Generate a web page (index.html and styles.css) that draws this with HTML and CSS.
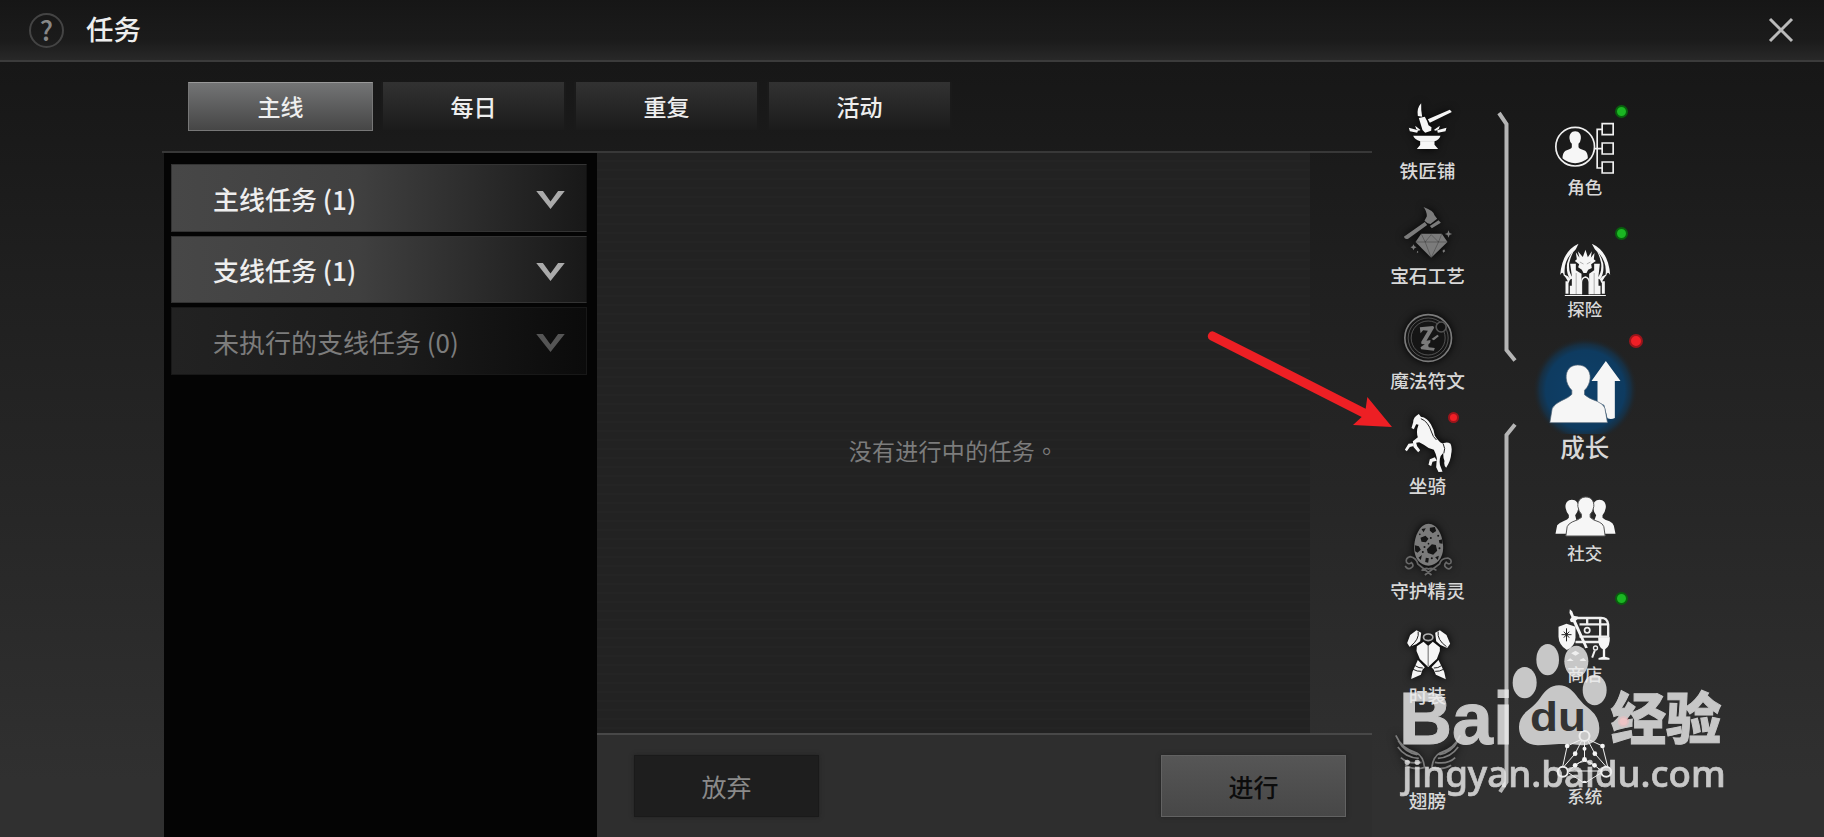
FILE: index.html
```
<!DOCTYPE html>
<html lang="zh-CN">
<head>
    <meta charset="UTF-8">
    <title>任务</title>
    <link rel="stylesheet" href="styles.css">
</head>
<body>
    <header class="topbar">
        <span class="help">?</span>
        <h1>任务</h1>
        <svg class="close" viewBox="0 0 26 26"><path d="M2 2L24 24M24 2L2 24"/></svg>
    </header>

    <main class="screen">
        <section class="quest">
            <div class="tabs">
                <button class="tab active">主线</button>
                <button class="tab">每日</button>
                <button class="tab">重复</button>
                <button class="tab">活动</button>
            </div>
            <div class="quest-body">
                <div class="quest-list">
                    <div class="group">主线任务 (1)<svg class="chevron" viewBox="0 0 30 20"><path d="M0 0H7L15 11L23 0H30L15 19Z"/></svg></div>
                    <div class="group">支线任务 (1)<svg class="chevron" viewBox="0 0 30 20"><path d="M0 0H7L15 11L23 0H30L15 19Z"/></svg></div>
                    <div class="group empty">未执行的支线任务 (0)<svg class="chevron" viewBox="0 0 30 20"><path d="M0 0H7L15 11L23 0H30L15 19Z"/></svg></div>
                </div>
                <div class="detail">
                    <div class="detail-text">没有进行中的任务<span class="stop">。</span></div>
                    <div class="actions">
                        <button class="btn disabled">放弃</button>
                        <button class="btn">进行</button>
                    </div>
                </div>
            </div>
        </section>

        <!-- 二级菜单 -->
        <ul class="submenu">
            <li>
                <svg class="icon" viewBox="52.5 15 240 186">
                    <path d="M152 40Q138 55 142 78L155 80Q151 58 152 40Z"/>
                    <path d="M145 84L163 80L170 94L174 106L183 112L182 122L164 128L156 120Z"/>
                    <path d="M172 88L238 59L244 66L178 98Z"/>
                    <path d="M115 113L143 121L140 128L118 124ZM134 107L150 120L145 122L137 117ZM228 113L200 121L202 128L225 124ZM208 107L190 120L196 122L205 117Z"/>
                    <path d="M128 137H210Q206 150 192 154V164L203 177H139L149 165V154Q132 148 128 137Z"/>
                    <path class="cut" d="M148 154H192" stroke-opacity=".3"/>
                </svg>
                <span>铁匠铺</span>
            </li>
            <li class="locked">
                <svg class="icon" viewBox="52.5 15 240 186">
                    <g transform="translate(0 -315)">
                        <path d="M159 351Q190 362 192 376L200 386L180 402L171 400L162 392L169 379Q169 363 159 351Z"/>
                        <path d="M163 396L170 405L113 446Q104 450 100 440ZM178 408L204 391L211 398L184 415Z"/>
                        <path d="M152 431H214L231 456L182 503L135 456Z"/>
                        <path class="cut" d="M135 456H231M152 431L164 456L182 503L204 456L214 431M164 456L182 434L204 456"/>
                        <path d="M234 421L237 429L245 432L237 435L234 443L231 435L223 432L231 429ZM129 463L132 469L138 472L132 475L129 481L126 475L120 472L126 469ZM221 478L224 484L218 488L216 482ZM140 482L144 486L139 490Z"/>
                    </g>
                </svg>
                <span>宝石工艺</span>
            </li>
            <li class="locked">
                <svg class="icon" viewBox="52.5 45 240 186">
                    <circle cx="173" cy="144" r="68" fill="#151515"/>
                    <circle class="line" cx="173" cy="144" r="70" stroke-width="5"/>
                    <circle class="line dim" cx="173" cy="144" r="60"/>
                    <circle class="line dim" cx="173" cy="144" r="51"/>
                    <path d="M148 112L188 108L191 113L168 152L180 150L179 158Q170 163 175 172L193 174L190 182L152 178L150 172L163 163L153 162L152 156L172 122L158 121L150 130Z"/>
                    <path d="M183 147L201 134L205 139L190 151Z"/>
                    <circle class="rune" cx="212" cy="111" r="15"/>
                </svg>
                <span>魔法符文</span>
            </li>
            <li>
                <svg class="icon" viewBox="52.5 360 240 186">
                    <path d="M145 372L151 380Q171 383 181 403Q191 420 193 437Q199 447 209 457Q216 462 220 459Q231 455 240 461Q246 473 242 492Q241 512 227 533Q219 526 222 513Q218 504 218 489Q207 499 208 509Q206 522 211 532L216 545L204 546L197 532L199 505Q196 490 190 479Q175 477 160 464L146 457L137 458L140 469L149 481L143 487L129 471L127 454L142 442Q136 424 144 404L137 403L130 418L123 414L128 397Q128 381 145 372Z"/>
                    <path d="M127 460L114 461L103 479L109 484L118 471L130 468ZM193 502L178 508L174 524L182 528L186 515L199 512Z"/>
                    <path class="cut" d="M151 386Q173 394 183 426Q187 441 198 450M218 461Q226 476 220 490" stroke-width="3"/>
                </svg>
                <span>坐骑</span>
                <i class="dot red horse"></i>
            </li>
            <li class="locked">
                <svg class="icon" viewBox="52.5 30 240 186">
                    <path d="M174 56C200 56 218 91 218 129C218 160 197 182 174 182C149 182 131 160 131 129C131 91 150 56 174 56Z"/>
                    <g class="holes">
                        <path d="M178 68L193 66L197 78L187 85L178 77ZM150 98L165 92L174 101L166 112L153 110ZM133 121L145 124L151 134L141 143L134 139ZM184 118L196 120L200 137L188 149L172 144L169 133ZM166 158L175 160L173 173L164 171ZM194 157L205 152L202 165ZM205 106L216 103L216 116L207 115ZM153 72L166 70L159 82ZM154 150L144 158L151 165Z"/>
                        <circle cx="181" cy="99" r="3"/><circle cx="162" cy="126" r="3"/><circle cx="184" cy="160" r="3"/><circle cx="203" cy="92" r="3"/>
                        <circle cx="148" cy="88" r="2.500"/><circle cx="207" cy="130" r="3"/><circle cx="157" cy="141" r="3"/><circle cx="174" cy="116" r="2.500"/>
                    </g>
                    <path class="line" d="M163 210L207 177Q211 160 232 159Q245 163 241 174Q235 180 227 172Q218 182 227 188Q236 197 244 184M183 210L142 177Q137 158 119 155Q104 159 108 172Q114 180 123 173Q132 182 123 188Q112 196 104 183M153 197Q166 187 174 192Q184 187 198 196" stroke-width="5" opacity=".8"/>
                </svg>
                <span>守护精灵</span>
            </li>
            <li>
                <svg class="icon" viewBox="52.5 345 240 186">
                    <path d="M138 376L152 383L149 409L137 418L117 425L110 414L119 390ZM208 376L194 383L197 409L210 420L230 429L239 416L228 390Z"/>
                    <path class="cut" d="M143 380Q147 403 120 424M203 380Q199 404 228 425" stroke-width="3"/>
                    <ellipse class="line" cx="173" cy="397" rx="14" ry="10" stroke-width="5" opacity=".7"/>
                    <path d="M159 410L173 423L187 410L208 427L208 438L199 462L173 486L148 462L138 438L139 424Z"/>
                    <path class="cut" d="M173 423V483" stroke-width="2"/>
                    <path d="M142 465L163 487L156 494L151 509L122 522L126 500ZM204 465L183 487L190 494L196 509L226 523L221 500Z"/>
                    <path class="cut" d="M134 482Q145 490 157 489M128 493Q140 500 153 499M213 482Q202 490 190 489M219 493Q207 500 194 499" stroke-width="3"/>
                </svg>
                <span>时装</span>
            </li>
            <li class="locked">
                <svg class="icon" viewBox="52.5 405 240 186">
                    <path class="line" d="M76 436Q92 475 139 489Q158 499 162 531M82 471Q104 503 145 505M91 503Q114 524 153 517M104 526Q130 542 163 532M269 436Q253 475 208 489Q189 499 184 531M263 471Q241 503 202 505M254 503Q233 524 193 517M242 526Q216 542 184 532M83 452Q103 488 140 494M263 452Q243 488 207 494" stroke-width="5"/>
                </svg>
                <span>翅膀</span>
            </li>
        </ul>

        <svg class="bracket" viewBox="1490 105 30 695">
            <path d="M1499 113L1506.500 124V350L1515 360.500M1515 424.500L1506.500 435V782L1500 792"/>
        </svg>

        <!-- 一级菜单 -->
        <ul class="menu">
            <li>
                <svg class="icon" viewBox="196.5 68 240 186">
                    <circle class="line" cx="287" cy="172" r="58" stroke-width="5"/>
                    <path d="M287 126C299 126 306 136 304 148Q303 158 297 163V174Q300 180 317 184Q325 190 325 207Q309 221 287 222Q264 221 249 207Q249 190 258 184Q275 180 277 174V163Q271 158 270 148C269 136 275 126 287 126Z"/>
                    <path class="line" d="M368 103H401V136H368ZM368 161H401V194H368ZM368 218H401V251H368ZM366 120H353V236H366M344 178H366" stroke-width="5"/>
                </svg>
                <span>角色</span>
                <i class="dot green"></i>
            </li>
            <li>
                <svg class="icon" viewBox="196.5 431 240 186">
                    <path d="M297 460Q248 482 242 554Q250 539 253 556Q259 559 268 579Q270 563 283 566Q266 548 269 519Q276 487 289 477ZM337 460Q387 482 392 554Q384 539 380 556Q375 559 365 579Q363 563 352 566Q368 548 365 519Q359 487 346 477Z"/>
                    <path d="M285 479Q250 511 256 553Q266 555 272 566Q259 548 263 519Q270 492 285 479ZM349 479Q384 511 378 553Q368 555 362 566Q375 548 371 519Q364 492 349 479Z" fill="#222"/>
                    <path d="M289 486L300 502L295 483L310 500L318 478L325 501L337 483L334 502L345 488L343 507L349 512L335 522L337 533L326 538L321 548H312L307 538L296 531L299 522L286 512L292 507Z"/>
                    <path class="cut" d="M301 515L312 521M333 515L322 521"/>
                    <path d="M272 520H289V540L306 550V612H277V556ZM344 520H361L357 556V612H329V550L344 540ZM258 573H267V610H258ZM367 573H376V610H367ZM271 586H285V612H271ZM349 586H363V612H349ZM256 614H379V622H256Z"/>
                    <path class="cut" d="M290 548V612M344 548V612"/>
                    <path class="line" d="M306 612V575Q307 562 318 560Q328 562 329 575V612" stroke-width="4"/>
                </svg>
                <span>探险</span>
                <i class="dot green"></i>
            </li>
            <li class="current">
                <svg class="icon" viewBox="136.5 40 360 300">
                    <defs>
                        <radialGradient id="glow">
                            <stop offset="0" stop-color="#0e406a"/>
                            <stop offset=".75" stop-color="#0e3b60"/>
                            <stop offset=".87" stop-color="#153249" stop-opacity=".8"/>
                            <stop offset="1" stop-color="#212121" stop-opacity="0"/>
                        </radialGradient>
                    </defs>
                    <circle cx="317" cy="208" r="158" fill="url(#glow)"/>
                    <path d="M379 121L423 181H406V292Q395 298 384 293L374 253L354 244V181H336Z"/>
                    <path d="M295 133C320 133 333 151 332 172Q330 195 315 209V222Q329 234 353 242Q371 250 376 262L384 306H211L218 264Q224 250 246 240Q270 230 277 221V209Q262 194 260 172C259 149 272 133 295 133Z" stroke="#506376" stroke-width="2"/>
                </svg>
                <span>成长</span>
                <i class="dot red"></i>
            </li>
            <li>
                <svg class="icon" viewBox="196.5 472 240 186">
                    <path d="M277 537C290 537 297 547 297 560Q295 575 287 584L292 603L288 639H228L233 614Q239 606 253 601Q265 596 268 591V583Q260 574 258 560C257 547 264 537 277 537ZM360 537C373 537 380 547 379 560Q377 575 369 584V591Q375 597 390 602Q401 607 403 615L408 639H348L343 603L350 584Q342 574 341 560C340 547 347 537 360 537Z"/>
                    <path d="M319 529C335 529 344 541 343 557Q341 573 332 581V590Q341 599 359 604Q370 609 373 618L377 646H259L263 618Q267 609 278 604Q298 597 306 590V581Q297 572 295 557C294 541 303 529 319 529Z" stroke="#555" stroke-width="3"/>
                </svg>
                <span>社交</span>
            </li>
            <li>
                <svg class="icon" viewBox="526.5 27 240 186">
                    <path class="line" d="M618 84H691Q713 82 716 103V140H630M630 103H716M692 85V140M653 85V105M618 156H690" stroke-width="7"/>
                    <circle class="line" cx="653" cy="121" r="8" stroke-width="5"/>
                    <path d="M567 110L591 101L618 110V143Q616 170 592 180Q568 165 567 140Z"/>
                    <path class="cut" d="M591 115V154M576 134H606M583 125L599 143M599 125L583 143" stroke-width="3"/>
                    <path d="M601 58L608 64L613 77L626 80L625 86L619 92L655 173L647 175L611 97L604 96L601 89L606 82L600 69Z"/>
                    <path d="M686 142H721Q722 170 707 178V200L720 204V209H687V204L700 200V178Q685 171 686 142Z"/>
                    <circle class="line" cx="678" cy="174" r="6" stroke-width="4"/>
                    <path class="line" d="M676 181L668 203M660 220H672" stroke-width="6"/>
                    <path d="M590 214L602 205L614 214L602 221ZM605 190L618 182L630 190L618 197ZM630 210L642 204L650 212L640 219Z"/>
                </svg>
                <span>商店</span>
                <i class="dot green"></i>
            </li>
            <li>
                <svg class="icon" viewBox="526.5 393 240 186">
                    <path class="line" d="M634 449L593 468L580 528M658 449L699 468L714 528M636 453L617 491L583 530M656 453L676 491L710 530M645 455V508L617 526L598 541M645 508L675 526L694 541M598 549L645 580L694 549M598 543H694M617 526Q645 502 675 526" stroke-width="3"/>
                    <circle class="line" cx="645" cy="438" r="15" stroke-width="6"/>
                    <circle class="line" cx="580" cy="545" r="15" stroke-width="6"/>
                    <circle class="line" cx="710" cy="545" r="15" stroke-width="6"/>
                    <circle cx="593" cy="468" r="7"/><circle cx="699" cy="468" r="7"/><circle cx="617" cy="491" r="7"/><circle cx="676" cy="491" r="7"/>
                    <circle cx="645" cy="476" r="6"/><circle cx="645" cy="508" r="7"/><circle cx="617" cy="526" r="7"/><circle cx="675" cy="526" r="7"/><circle cx="645" cy="579" r="7"/>
                </svg>
                <span>系统</span>
                <i class="dot red sys"></i>
            </li>
        </ul>
    </main>

    <!-- 指向坐骑的箭头 -->
    <svg class="arrow" viewBox="0 0 690 420">
        <path d="M102 65L557 296L562 261L636 351L519 345L545 321L90 90A14 14 0 0 1 102 65Z"/>
    </svg>

    <svg class="watermark" viewBox="0 0 1140 741">
        <g class="mark">
            <text class="logo" x="87" y="461" textLength="343" lengthAdjust="spacingAndGlyphs">Bai</text>
            <ellipse cx="464" cy="278" rx="36" ry="47"/>
            <ellipse cx="533" cy="209" rx="34" ry="47"/>
            <ellipse cx="619" cy="214" rx="36" ry="47"/>
            <ellipse cx="674" cy="300" rx="36" ry="46"/>
            <path d="M567 286C594 286 610 304 624 323Q637 341 661 359Q688 382 688 415C688 447 669 467 635 466Q603 461 567 462Q534 464 505 466C468 467 447 442 447 411Q447 382 474 361Q498 343 512 322C526 301 541 286 567 286Z"/>
            <text class="logo cn" x="722" y="447" textLength="332" lengthAdjust="spacingAndGlyphs">经验</text>
            <text class="url" x="97" y="590" textLength="970" lengthAdjust="spacingAndGlyphs">jingyan.baidu.com</text>
        </g>
        <text class="du" x="480" y="424" textLength="168" lengthAdjust="spacingAndGlyphs">du</text>
    </svg>
</body>
</html>
```
FILE: styles.css
```
* {
    box-sizing: border-box;
}
body {
    margin: 0;
    height: 837px;
    overflow: hidden;
    position: relative;
    color: #eee;
    background: linear-gradient(#171717 62px, #202020 300px, #272727 520px, #303030 780px);
    font-family: "Noto Sans CJK SC", sans-serif;
}
.topbar {
    display: flex;
    align-items: center;
    height: 62px;
    padding: 0 30px 0 29px;
    background: linear-gradient(#161616, #1b1b1b 40px, #282828);
    border-bottom: 2px solid #3b3b3b;
}
.help {
    width: 35px;
    height: 35px;
    line-height: 30px;
    border: 2px solid #444;
    border-radius: 50%;
    text-align: center;
    font-size: 27px;
    font-weight: 500;
    color: #888;
}
h1 {
    margin: 0 auto 4px 22px;
    font-size: 27.5px;
    line-height: 40px;
    font-weight: 500;
}
.close {
    width: 26px;
    height: 26px;
    fill: none;
    stroke: #bbb;
    stroke-width: 3;
}
.screen {
    display: flex;
    height: 775px;
    padding-left: 162px;
}
.quest {
    display: flex;
    flex-direction: column;
    width: 1210px;
}
.tabs {
    display: flex;
    gap: 8px;
    height: 91px;
    padding: 20px 26px;
    border-bottom: 2px solid #383838;
}
button {
    font-family: inherit;
    color: inherit;
    padding: 0;
    border: none;
}
.tab {
    width: 185px;
    height: 48px;
    font-size: 23px;
    line-height: 48px;
    font-weight: 500;
    background: linear-gradient(#323232, #1b1b1b);
    border: solid #1a1a1a;
    border-width: 0 2px;
}
.tab.active {
    height: 49px;
    background: linear-gradient(#737475, #464646);
    border: 1px solid #777;
    border-top-color: #999;
    line-height: 47px;
}
.quest-body {
    display: flex;
    flex: 1;
}
.quest-list {
    display: flex;
    flex-direction: column;
    gap: 4px;
    width: 433px;
    margin-left: 2px;
    padding: 11px 10px 0 7px;
    background: #040404;
}
.group {
    display: flex;
    align-items: center;
    justify-content: space-between;
    height: 67.5px;
    padding: 1px 21px 0 41px;
    font-size: 26px;
    font-weight: 500;
    background: linear-gradient(90deg, #474747, #404040 45%, #181818);
    border: 1px solid #333;
    border-right-color: #111;
}
.group.empty {
    font-weight: 400;
    color: #7c7c7c;
    background: linear-gradient(90deg, #222, #1b1b1b 55%, #0b0b0b);
    border-color: #181818;
}
.chevron {
    width: 29px;
    height: 19px;
    margin-top: 5px;
    fill: #aaa;
}
.empty .chevron {
    fill: #555;
}
.detail {
    display: flex;
    flex-direction: column;
    flex: 1;
}
.detail-text {
    display: flex;
    align-items: center;
    justify-content: center;
    height: 580px;
    margin-right: 62px;
    padding: 14px 0 0;
    font-size: 23px;
    letter-spacing: .3px;
    color: #7c7c7c;
    background: repeating-linear-gradient(#222 0 7px, #242424 7px 9px);
}
.stop {
    font-family: "Noto Sans CJK TC", sans-serif;
}
.actions {
    display: flex;
    justify-content: space-between;
    flex: 1;
    padding: 20px 26px 0 37px;
    border-top: 2px solid #484848;
    background: #2e2e2e;
}
.btn {
    width: 185px;
    height: 62px;
    padding-bottom: 1px;
    font-size: 25px;
    font-weight: 500;
    color: #0c0c0c;
    background: linear-gradient(#565656, #474747);
    border: 1px solid #626262;
    box-shadow: 0 0 4px #222;
}
.btn.disabled {
    font-weight: 400;
    color: #8a8a8a;
    background: #1e1e1e;
    border-color: #1a1a1a;
}
ul {
    list-style: none;
    margin: 0;
    padding: 0;
}
.submenu {
    width: 111px;
    padding-top: 32.5px;
}
.submenu li,
.menu li {
    position: relative;
    display: flex;
    flex-direction: column;
    align-items: center;
    height: 105px;
    font-size: 18.7px;
    line-height: 26px;
    font-weight: 500;
    color: #d8d8d8;
    white-space: nowrap;
}
.menu {
    width: 120px;
    margin-left: 4.8px;
    padding-top: 50.3px;
}
.menu li {
    height: 121.8px;
    font-size: 17.5px;
}
.icon {
    flex: none;
    width: 80px;
    height: 62px;
    fill: #f6f6f6;
    color: #f0f0f0;
}
.submenu .icon {
    filter: drop-shadow(0 0 4px #000);
}
.locked .icon {
    fill: #7b7b7b;
    color: #7b7b7b;
}
.line {
    fill: none;
    stroke: currentColor;
}
.dim {
    opacity: .6;
    stroke-width: 3;
}
.cut {
    fill: none;
    stroke: #222;
}
.rune {
    fill: #111;
    stroke: #555;
    stroke-width: 5;
}
.holes {
    fill: #161616;
}
.menu .current {
    font-size: 24.5px;
}
.current .icon {
    width: 120px;
    height: 100px;
    margin-top: -22.3px;
}
.dot {
    position: absolute;
    left: 90px;
    top: -7px;
    width: 13px;
    height: 13px;
    border: 2px solid;
    border-radius: 50%;
}
.green {
    background: #1bb623;
    border-color: #08600d;
}
.red {
    background: #f01f26;
    border-color: #9b151b;
}
.current .dot {
    left: 104px;
    top: -22px;
    width: 14px;
    height: 14px;
}
.dot.horse {
    left: 76px;
    top: 2px;
    width: 11px;
    height: 11px;
}
.dot.sys {
    left: 93px;
    top: -5px;
    width: 11px;
    height: 11px;
}
.bracket {
    width: 30px;
    height: 695px;
    margin: 43px 0 0 7px;
    fill: none;
    stroke: #b5b5b5;
    stroke-width: 4;
}
.arrow {
    position: absolute;
    left: 1180px;
    top: 310px;
    width: 230px;
    height: 140px;
    fill: #ed1f24;
}
.watermark {
    position: absolute;
    left: 1370px;
    top: 590px;
    width: 380px;
    height: 247px;
}
.mark {
    fill: #eee;
    opacity: .8;
}
.logo {
    font-family: "Liberation Sans", sans-serif;
    font-size: 222px;
    font-weight: 700;
    stroke: #eee;
    stroke-width: 3;
}
.logo.cn {
    font-family: "Noto Sans CJK SC", sans-serif;
    font-size: 166px;
    font-weight: 900;
}
.url {
    font-family: "Noto Sans", sans-serif;
    font-size: 108px;
    font-weight: 500;
    stroke: #eee;
    stroke-width: 2;
}
.du {
    font-family: "Liberation Sans", sans-serif;
    font-size: 120px;
    font-weight: 700;
    fill: #333;
}
```
